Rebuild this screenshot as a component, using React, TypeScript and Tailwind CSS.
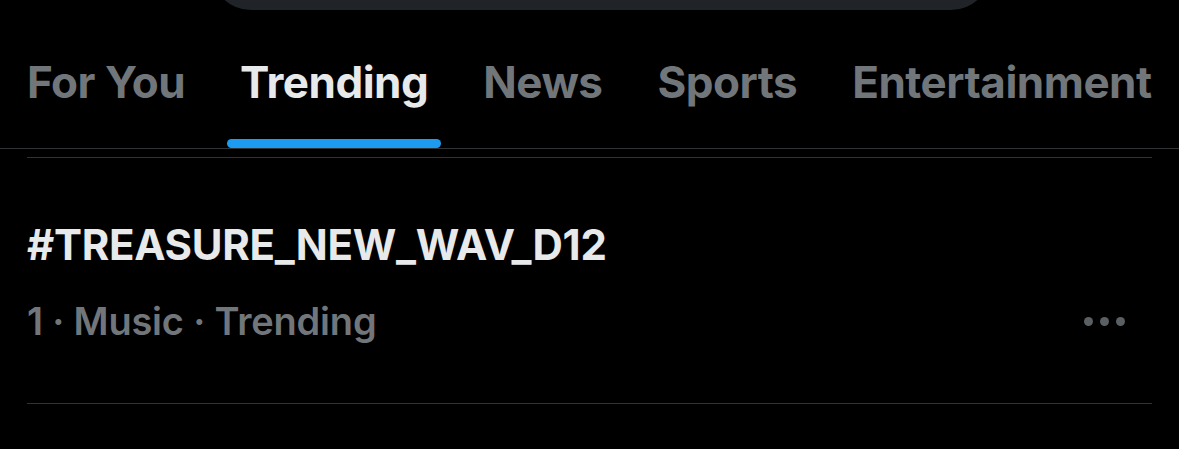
import React from 'react';

const tabs = ['For You', 'Trending', 'News', 'Sports', 'Entertainment'];

const App: React.FC = () => {
  const active = 'Trending';

  return (
    <div
      className="w-[1179px] h-[449px] bg-black overflow-hidden"
      style={{ fontFamily: 'Inter, "Noto Sans", sans-serif' }}
    >
      {/* search bar bottom edge */}
      <div className="h-[10px] overflow-hidden pl-[211px]">
        <div className="w-[780px] h-[80px] mt-[-70px] rounded-[40px] bg-[#202327]"></div>
      </div>

      {/* tabs */}
      <div className="flex gap-[31px] pl-[15px] pt-[50px] border-b border-[#2f3336]">
        {tabs.map((t) => (
          <div key={t} className="flex flex-col px-3">
            <span
              className={
                'h-[44px] text-[44px] leading-[44px] font-bold tracking-[-0.5px] whitespace-nowrap ' +
                (t === active ? 'text-[#e7e9ea]' : 'text-[#71767b]')
              }
            >
              {t}
            </span>
            <div
              className={
                'mt-[35px] h-[9px] -mx-[13px] rounded-full ' +
                (t === active ? 'bg-[#1d9bf0]' : 'bg-transparent')
              }
            ></div>
          </div>
        ))}
      </div>

      <div className="mx-[27px] mt-[8px] h-px bg-[#2f3336]"></div>

      {/* trend item */}
      <div className="px-[27px] pt-[66px]">
        <div className="h-[42px] text-[42px] leading-[42px] font-bold text-[#e7e9ea] tracking-[-0.3px]">
          #TREASURE_NEW_WAV_D12
        </div>
        <div className="mt-[36px] flex items-center justify-between">
          <span className="h-[38px] text-[38px] leading-[38px] font-semibold text-[#71767b] tracking-[-0.2px]">
            1 · Music · Trending
          </span>
          <div className="flex gap-[7px] mr-[27px]">
            <span className="w-[9px] h-[9px] rounded-full bg-[#5a5f63]"></span>
            <span className="w-[9px] h-[9px] rounded-full bg-[#5a5f63]"></span>
            <span className="w-[9px] h-[9px] rounded-full bg-[#5a5f63]"></span>
          </div>
        </div>
        <div className="mt-[63px] h-px bg-[#2f3336]"></div>
      </div>
    </div>
  );
};

export default App;
